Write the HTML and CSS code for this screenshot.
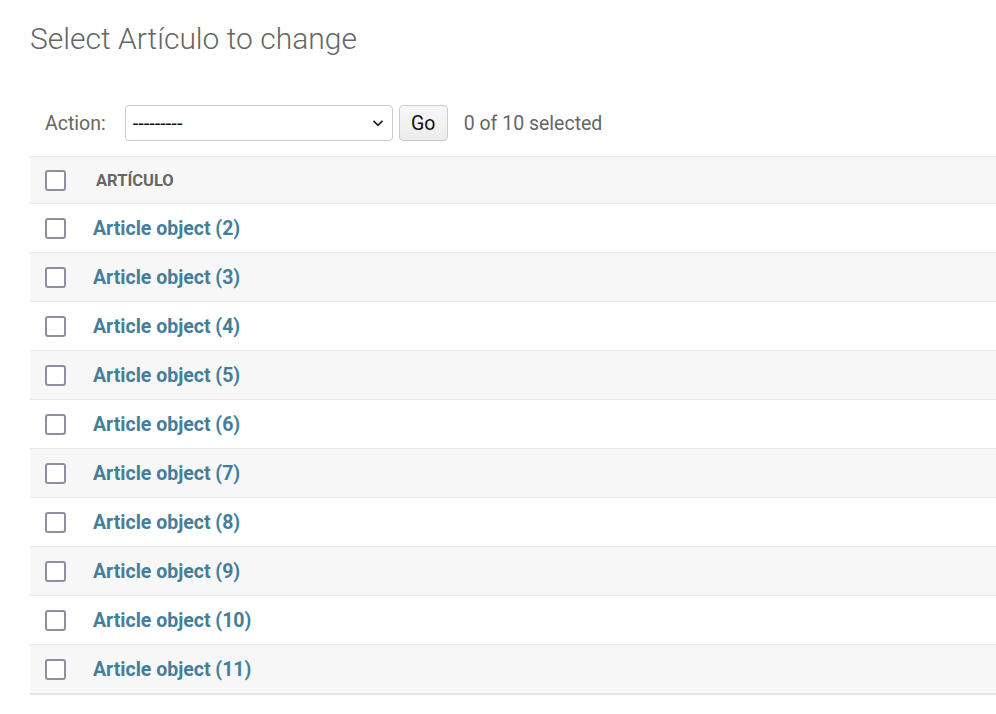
FILE: index.html
```html
<!DOCTYPE html>
<html lang="es">
<head>
<meta charset="utf-8">
<title>Select Artículo to change</title>
<link rel="stylesheet" href="styles.css">
</head>
<body>
<div class="content">
  <h1 class="title">Select Artículo to change</h1>
  <div class="actions">
    <label class="action-label">Action:</label>
    <div class="select">
      <span class="select-text">---------</span>
      <svg class="chevron" width="14" height="14" viewBox="0 0 14 14"><path d="M2.5 4.8 L7 9.3 L11.5 4.8" fill="none" stroke="#222" stroke-width="1.8"/></svg>
    </div>
    <button class="go">Go</button>
    <span class="counter">0 of 10 selected</span>
  </div>
  <table class="results">
    <thead>
      <tr><th class="check-col"><span class="checkbox"></span></th><th class="name-col">ARTÍCULO</th></tr>
    </thead>
    <tbody>
      <tr><td class="check-col"><span class="checkbox"></span></td><td><a href="#">Article object (2)</a></td></tr>
      <tr><td class="check-col"><span class="checkbox"></span></td><td><a href="#">Article object (3)</a></td></tr>
      <tr><td class="check-col"><span class="checkbox"></span></td><td><a href="#">Article object (4)</a></td></tr>
      <tr><td class="check-col"><span class="checkbox"></span></td><td><a href="#">Article object (5)</a></td></tr>
      <tr><td class="check-col"><span class="checkbox"></span></td><td><a href="#">Article object (6)</a></td></tr>
      <tr><td class="check-col"><span class="checkbox"></span></td><td><a href="#">Article object (7)</a></td></tr>
      <tr><td class="check-col"><span class="checkbox"></span></td><td><a href="#">Article object (8)</a></td></tr>
      <tr><td class="check-col"><span class="checkbox"></span></td><td><a href="#">Article object (9)</a></td></tr>
      <tr><td class="check-col"><span class="checkbox"></span></td><td><a href="#">Article object (10)</a></td></tr>
      <tr><td class="check-col"><span class="checkbox"></span></td><td><a href="#">Article object (11)</a></td></tr>
    </tbody>
  </table>
</div>
</body>
</html>
```
FILE: styles.css
```css
html, body {
  margin: 0;
  padding: 0;
  background: #fff;
}
body {
  font-family: Roboto, "Liberation Sans", sans-serif;
  color: #333;
}
.content {
  padding: 0 0 0 30px;
}
.title {
  margin: 0;
  padding-top: 21px;
  font-size: 30px;
  font-weight: 300;
  color: #666;
  line-height: 36px;
  height: 48px;
}
.actions {
  display: flex;
  align-items: center;
  height: 36px;
  margin-top: 36px;
  padding-left: 15px;
  margin-bottom: 15px;
}
.action-label {
  font-size: 19.5px;
  color: #666;
  margin-right: 19px;
}
.select {
  box-sizing: border-box;
  width: 268px;
  height: 36px;
  border: 1px solid #ccc;
  border-radius: 4px;
  display: flex;
  align-items: center;
  justify-content: space-between;
  padding: 0 7px 0 7px;
  background: #fff;
}
.select-text {
  font-size: 20px;
  color: #111;
}
.chevron {
  display: block;
}
.go {
  box-sizing: border-box;
  margin-left: 6px;
  width: 49px;
  height: 36px;
  border: 1px solid #ccc;
  border-radius: 4px;
  background: linear-gradient(#f7f7f7, #ececec);
  font-family: Roboto, "Liberation Sans", sans-serif;
  font-size: 19.5px;
  color: #111;
  padding: 0;
}
.counter {
  margin-left: 16px;
  font-size: 19.5px;
  color: #666;
}
.results {
  width: 100%;
  border-collapse: collapse;
}
.results thead tr {
  background: #f7f7f7;
  border-top: 1px solid #e8e8e8;
  border-bottom: 1px solid #e8e8e8;
}
.results th {
  height: 45px;
  padding: 0;
  text-align: left;
  vertical-align: middle;
}
.results th.name-col {
  font-size: 16.5px;
  font-weight: 700;
  color: #666;
  padding-left: 3px;
  padding-top: 1px;
}
.check-col {
  width: 48px;
  padding: 0 0 0 15px !important;
}
.results td {
  height: 48px;
  padding: 0;
  vertical-align: middle;
  border-bottom: 1px solid #e8e8e8;
}
.results tbody tr:nth-child(even) {
  background: #f7f7f7;
}
.results tbody tr:last-child td {
  border-bottom: 2px solid #e6e6e6;
}
.results td a {
  font-size: 19.5px;
  font-weight: 700;
  color: #447e9b;
  text-decoration: none;
}
.checkbox {
  display: block;
  box-sizing: border-box;
  width: 21px;
  height: 21px;
  border: 2px solid #8f8f9d;
  border-radius: 3px;
  background: #fff;
}
```
